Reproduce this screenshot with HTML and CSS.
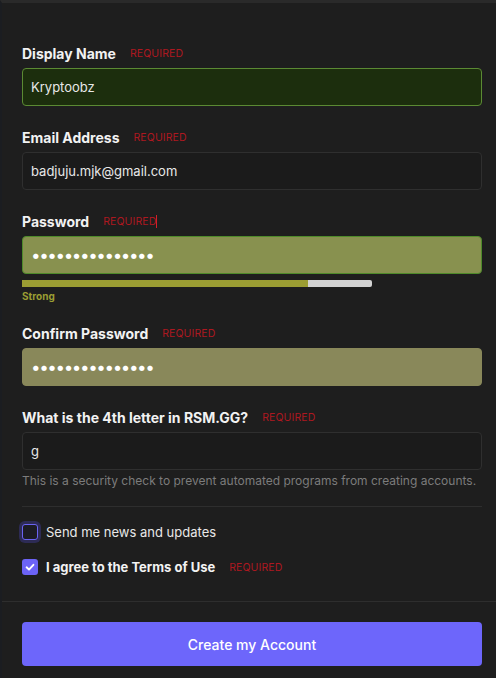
FILE: index.html
```html
<!DOCTYPE html>
<html lang="en">
<head>
<meta charset="utf-8">
<link rel="stylesheet" href="styles.css">
</head>
<body>
<div class="panel">
  <form class="form">
    <div class="field">
      <div class="label-row"><span class="label">Display Name</span><span class="req">REQUIRED</span></div>
      <div class="input input-valid">Kryptoobz</div>
    </div>
    <div class="field">
      <div class="label-row"><span class="label">Email Address</span><span class="req">REQUIRED</span></div>
      <div class="input">badjuju.mjk@gmail.com</div>
    </div>
    <div class="field field-pw">
      <div class="label-row"><span class="label">Password</span><span class="req">REQUIRED<span class="caret"></span></span></div>
      <div class="input input-pw">&bull;&bull;&bull;&bull;&bull;&bull;&bull;&bull;&bull;&bull;&bull;&bull;&bull;&bull;&bull;</div>
      <div class="strength"><div class="strength-fill" style="width: 81.7%"></div></div>
      <div class="strength-text">Strong</div>
    </div>
    <div class="field">
      <div class="label-row"><span class="label">Confirm Password</span><span class="req">REQUIRED</span></div>
      <div class="input input-confirm">&bull;&bull;&bull;&bull;&bull;&bull;&bull;&bull;&bull;&bull;&bull;&bull;&bull;&bull;&bull;</div>
    </div>
    <div class="field field-q">
      <div class="label-row"><span class="label">What is the 4th letter in RSM.GG?</span><span class="req">REQUIRED</span></div>
      <div class="input">g</div>
      <div class="help">This is a security check to prevent automated programs from creating accounts.</div>
    </div>
    <div class="divider"></div>
    <div class="check-row">
      <span class="box box-focus"></span>
      <span class="check-text">Send me news and updates</span>
    </div>
    <div class="check-row check-row-2">
      <span class="box box-on"><svg viewBox="0 0 16 16" width="16" height="16"><path d="M4.6 8.3 L7 10.6 L11.4 5.8" fill="none" stroke="#fff" stroke-width="1.9" stroke-linecap="round" stroke-linejoin="round"/></svg></span>
      <span class="check-text check-bold">I agree to the Terms of Use</span><span class="req">REQUIRED</span>
    </div>
  </form>
  <div class="footer">
    <button class="btn" type="button">Create my Account</button>
  </div>
</div>
</body>
</html>
```
FILE: styles.css
```css
* { box-sizing: border-box; }
html, body { margin: 0; padding: 0; }
body {
  background: #1e1e1e;
  font-family: Inter, "Noto Sans", sans-serif;
  color: #e8e8e8;
  width: 496px;
  height: 678px;
  overflow: hidden;
}
.panel {
  border-top: 3px solid #2a2a2a;
  border-left: 2px solid #1b1d21;
  height: 678px;
}
.form {
  padding: 41px 14px 0 20px;
}
.field { margin-bottom: 22px; }
.label-row {
  display: flex;
  align-items: center;
  height: 18px;
  margin-bottom: 6px;
}
.label {
  font-size: 14px;
  font-weight: 700;
  color: #f2f2f2;
}
.req {
  font-size: 10.5px;
  color: #ad1820;
  letter-spacing: 0.1px;
  margin-left: 14px;
  display: inline-flex;
  align-items: center;
}
.caret {
  display: inline-block;
  width: 1px;
  height: 13px;
  background: #d21f2a;
  margin-left: 0;
}
.input {
  height: 38px;
  border: 1px solid #2f2f2f;
  border-radius: 4px;
  background: #1b1b1b;
  padding: 0 8px;
  display: flex;
  align-items: center;
  font-size: 13px;
  color: #e8e8e8;
}
.input-valid {
  background: #1c2e0d;
  border-color: #5b8a33;
}
.input-pw {
  background: #88914f;
  border-color: #4e8a2a;
  color: #ffffff;
  font-size: 17px;
  letter-spacing: -1.4px;
}
.input-confirm {
  background: #89885a;
  border-color: #89885a;
  color: #ffffff;
  font-size: 17px;
  letter-spacing: -1.4px;
}
.field-pw { margin-bottom: 22px; }
.strength {
  margin-top: 6px;
  width: 350px;
  height: 7px;
  background: #d2d2d2;
  border-radius: 0 2px 2px 0;
  overflow: hidden;
}
.strength-fill {
  height: 100%;
  background: #9b9d33;
}
.strength-text {
  margin-top: 3px;
  font-size: 10px;
  font-weight: 700;
  color: #9b9d33;
  line-height: 12px;
}
.field-q { margin-bottom: 0; }
.help {
  margin-top: 3px;
  font-size: 12px;
  line-height: 16px;
  color: #7c7c7c;
  white-space: nowrap;
}
.divider {
  margin-top: 17px;
  height: 1px;
  background: #2e2e2e;
}
.check-row {
  display: flex;
  align-items: center;
  height: 18px;
  margin-top: 16px;
}
.check-row-2 { margin-top: 17px; }
.box {
  width: 16px;
  height: 16px;
  border-radius: 3px;
  margin-right: 8px;
  flex: none;
  display: flex;
  align-items: center;
  justify-content: center;
}
.box-focus {
  border: 1.5px solid #6a63f2;
  background: #1c1c24;
  box-shadow: 0 0 0 3px #2d2b55;
}
.box-on {
  background: #6c63f6;
}
.check-text {
  font-size: 13px;
  color: #e8e8e8;
}
.check-bold {
  font-weight: 700;
  color: #f2f2f2;
}
.footer {
  margin-top: 25px;
  border-top: 1px solid #2e2e2e;
  padding: 20px 14px 0 20px;
}
.btn {
  width: 100%;
  height: 44px;
  border: 0;
  border-radius: 4px;
  background: #6d66fb;
  color: #ffffff;
  font-family: Inter, "Noto Sans", sans-serif;
  font-size: 14px;
  font-weight: 500;
}
```
